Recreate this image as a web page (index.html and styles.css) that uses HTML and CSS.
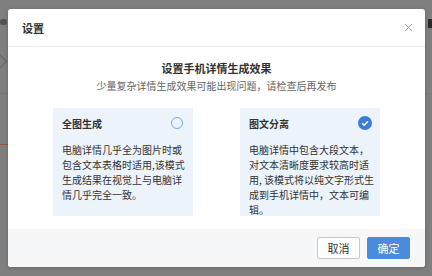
FILE: index.html
```html
<!DOCTYPE html>
<html lang="zh-CN">

<head>
    <meta charset="UTF-8">
    <meta name="viewport" content="width=device-width, initial-scale=1.0">
    <title>设置</title>
    <link rel="stylesheet" href="styles.css">
</head>

<body>
    <!-- page behind the mask, mostly hidden -->
    <div class="backdrop">
        <span class="bg-dots"></span>
        <span class="bg-chevron"></span>
        <span class="bg-line"></span>
        <span class="bg-orange"></span>
        <span class="bg-block"></span>
        <span class="bg-line-r"></span>
    </div>

    <div class="mask">
        <div class="dialog">
            <div class="dialog-header">
                <span class="dialog-title">设置</span>
                <svg class="close" viewBox="0 0 10 10">
                    <path d="M1 1L9 9M9 1L1 9" stroke="#999" stroke-width="1" fill="none" />
                </svg>
            </div>
            <div class="dialog-body">
                <h2>设置手机详情生成效果</h2>
                <p class="tip">少量复杂详情生成效果可能出现问题，请检查后再发布</p>
                <div class="options">
                    <div class="option">
                        <div class="option-head">
                            <span>全图生成</span>
                            <span class="radio"></span>
                        </div>
                        <p>电脑详情几乎全为图片时或包含文本表格时适用,该模式生成结果在视觉上与电脑详情几乎完全一致。</p>
                    </div>
                    <div class="option">
                        <div class="option-head">
                            <span>图文分离</span>
                            <svg class="radio-checked" viewBox="0 0 14 14">
                                <circle cx="7" cy="7" r="7" fill="#3b7dd8" />
                                <path d="M4 7.2L6.2 9.2L10 5.2" stroke="#fff" stroke-width="1.4" fill="none" />
                            </svg>
                        </div>
                        <p>电脑详情中包含大段文本，对文本清晰度要求较高时适用, 该模式将以纯文字形式生成到手机详情中，文本可编辑。</p>
                    </div>
                </div>
            </div>
            <div class="dialog-footer">
                <button class="btn">取消</button>
                <button class="btn btn-primary">确定</button>
            </div>
        </div>
    </div>
</body>

</html>
```

FILE: styles.css
```css
body {
    margin: 0;
    padding: 0;
    font-family: "Noto Sans CJK SC", "Liberation Sans", sans-serif;
    background-color: #7f7f7f;
    width: 432px;
    height: 276px;
    overflow: hidden;
    position: relative;
}

.backdrop span {
    position: absolute;
    display: block;
}

.bg-dots {
    left: 0;
    top: 19px;
    width: 7px;
    height: 6px;
    background-color: #333;
    border-radius: 3px;
    opacity: 0.6;
}

.bg-chevron {
    left: -6px;
    top: 56px;
    width: 10px;
    height: 10px;
    border-right: 1px solid #666;
    border-top: 1px solid #666;
    transform: rotate(45deg);
}

.bg-line {
    left: 0;
    top: 93px;
    width: 8px;
    height: 1px;
    background-color: #777;
}

.bg-orange {
    left: 0;
    top: 144px;
    width: 8px;
    height: 1px;
    background-color: #a2522c;
}

.bg-block {
    left: 428px;
    top: 19px;
    width: 4px;
    height: 9px;
    background-color: #2a2a2a;
}

.bg-line-r {
    left: 426px;
    top: 93px;
    width: 6px;
    height: 1px;
    background-color: #777;
}

.mask {
    position: relative;
    padding: 9px 7px 0 8px;
}

.dialog {
    background-color: #fff;
    border-radius: 3px;
    overflow: hidden;
    box-shadow: 0 1px 4px rgba(0, 0, 0, 0.2);
}

.dialog-header {
    height: 37px;
    display: flex;
    align-items: center;
    justify-content: space-between;
    padding: 0 14px;
    border-bottom: 1px solid #ebebeb;
}

.dialog-title {
    font-size: 11px;
    font-weight: bold;
    color: #333;
}

.close {
    width: 9px;
    height: 9px;
    margin-right: -2px;
}

.dialog-body {
    padding: 13px 0 13px;
    text-align: center;
}

.dialog-body h2 {
    margin: 0;
    font-size: 11px;
    line-height: 16px;
    color: #333;
}

.tip {
    margin: 2px 0 0;
    font-size: 10px;
    line-height: 16px;
    color: #666;
}

.options {
    display: flex;
    justify-content: center;
    gap: 47px;
    margin-top: 14px;
}

.option {
    width: 140px;
    height: 108px;
    box-sizing: border-box;
    padding: 8px 9px 0;
    background-color: #edf3fa;
    text-align: left;
}

.option-head {
    display: flex;
    align-items: center;
    justify-content: space-between;
    height: 14px;
    font-size: 10px;
    font-weight: bold;
    color: #333;
}

.radio {
    width: 10px;
    height: 10px;
    border: 1.5px solid #78a6e5;
    border-radius: 50%;
    margin-right: 1px;
}

.radio-checked {
    width: 14px;
    height: 14px;
    margin-right: -1px;
}

.option p {
    margin: 12px -5px 0 0;
    font-size: 10px;
    line-height: 15px;
    color: #333;
}

.dialog-footer {
    height: 38px;
    background-color: #f6f7f9;
    display: flex;
    align-items: center;
    justify-content: flex-end;
    gap: 7px;
    padding: 0 15px;
}

.btn {
    width: 43px;
    height: 22px;
    padding: 0;
    border: 1px solid #c8c8c8;
    border-radius: 2px;
    background-color: #fff;
    color: #333;
    font-family: inherit;
    font-size: 11px;
    cursor: pointer;
}

.btn-primary {
    border-color: #4a8bdb;
    background-color: #4a8bdb;
    color: #fff;
}
```
